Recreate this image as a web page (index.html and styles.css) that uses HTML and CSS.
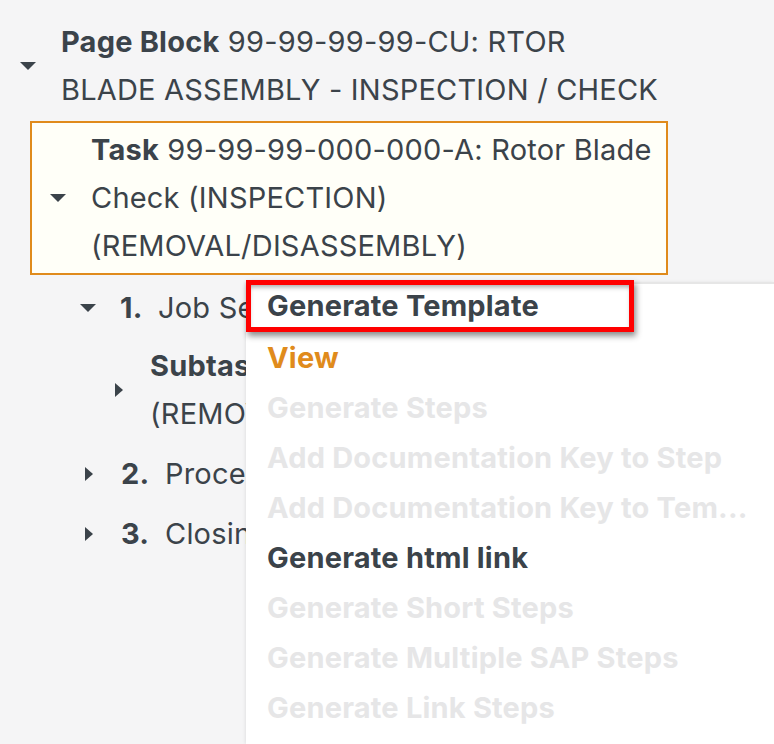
FILE: index.html
```html
<!DOCTYPE html>
<html>
<head>
<meta charset="utf-8">
<link rel="stylesheet" href="styles.css">
</head>
<body>
<div class="tree">
  <div class="node page">
    <span class="caret down"></span>
    <div class="text"><b>Page Block</b> 99-99-99-99-CU: RTOR<br>BLADE ASSEMBLY - INSPECTION / CHECK</div>
  </div>
  <div class="node task">
    <span class="caret down"></span>
    <div class="text"><b>Task</b> 99-99-99-000-000-A: Rotor Blade<br>Check (INSPECTION)<br>(REMOVAL/DISASSEMBLY)</div>
  </div>
  <div class="node step s1">
    <span class="caret down"></span>
    <div class="text"><b class="num">1.</b>Job Set-up</div>
  </div>
  <div class="node subtask">
    <span class="caret right"></span>
    <div class="text"><b>Subtask</b> 99-99-99-000-001-A<br>(REMOVAL)</div>
  </div>
  <div class="node step s2">
    <span class="caret right"></span>
    <div class="text"><b class="num">2.</b>Procedure</div>
  </div>
  <div class="node step s3">
    <span class="caret right"></span>
    <div class="text"><b class="num">3.</b>Closing</div>
  </div>
</div>
<div class="menu">
  <div class="item active">Generate Template</div>
  <div class="item orange">View</div>
  <div class="item disabled">Generate Steps</div>
  <div class="item disabled">Add Documentation Key to Step</div>
  <div class="item disabled">Add Documentation Key to Tem...</div>
  <div class="item">Generate html link</div>
  <div class="item disabled">Generate Short Steps</div>
  <div class="item disabled">Generate Multiple SAP Steps</div>
  <div class="item disabled">Generate Link Steps</div>
</div>
</body>
</html>
```
FILE: styles.css
```css
html, body {
  margin: 0;
  padding: 0;
  background: #f5f5f6;
  height: 100%;
  overflow: hidden;
}
body {
  font-family: Inter, "Open Sans", sans-serif;
  color: #3b434a;
  font-size: 29px;
  letter-spacing: 0.2px;
  position: relative;
}
.tree {
  padding-top: 18px;
}
.node {
  display: flex;
  align-items: center;
  line-height: 48px;
  white-space: nowrap;
}
.node .text {
  flex: 1;
}
.node b {
  font-weight: 700;
}
.caret {
  display: block;
  width: 0;
  height: 0;
  flex: none;
}
.caret.down {
  border-left: 8px solid transparent;
  border-right: 8px solid transparent;
  border-top: 8px solid #3b434a;
}
.caret.right {
  border-top: 7px solid transparent;
  border-bottom: 7px solid transparent;
  border-left: 8px solid #3b434a;
}
.page {
  padding-left: 20px;
}
.page .caret {
  margin-right: 25px;
}
.task {
  margin: 7px 0 0 30px;
  width: 616px;
  border: 2px solid #e08b1c;
  background: #fffff8;
  padding: 3px 0 3px 18px;
}
.task .caret {
  margin-right: 25px;
}
.num {
  display: inline-block;
  width: 44px;
}
.s1 {
  margin-top: 9px;
  padding-left: 80px;
}
.s1 .caret {
  margin-right: 24px;
}
.s1 .num {
  width: 38px;
}
.subtask {
  padding-left: 115px;
  margin-top: 10px;
}
.subtask .caret {
  margin-right: 27px;
}
.s2, .s3 {
  margin-top: 12px;
  padding-left: 85px;
}
.s2 .caret, .s3 .caret {
  margin-right: 28px;
}
.menu {
  position: absolute;
  left: 246px;
  right: 0;
  top: 282px;
  bottom: 0;
  background: #ffffff;
  border-top: 2px solid #e6e6e6;
  box-shadow: -1px 0 3px rgba(0,0,0,0.08);
}
.item {
  height: 50px;
  line-height: 50px;
  padding-left: 21px;
  font-weight: 700;
  color: #3b434a;
  white-space: nowrap;
}
.item.active {
  margin-top: -4px;
  width: 362px;
  height: 42px;
  line-height: 42px;
  padding-left: 16px;
  border: 5px solid #ff0000;
  box-shadow: 2px 4px 6px rgba(0,0,0,0.45), inset 0 4px 5px -2px rgba(0,0,0,0.35);
  margin-bottom: 1px;
}
.item.orange {
  color: #e08b1c;
}
.item.disabled {
  color: #e6e6e7;
}
```
